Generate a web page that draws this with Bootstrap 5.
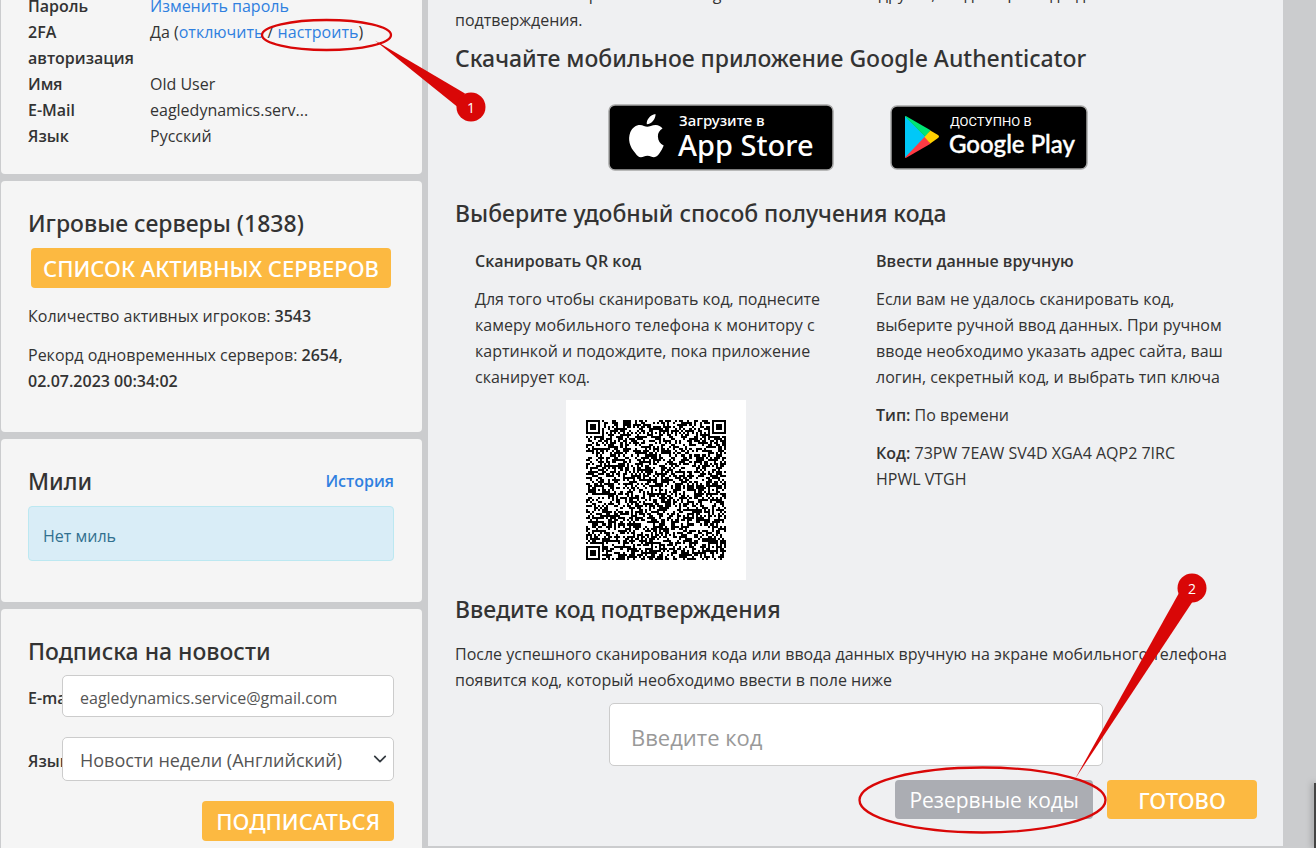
<!DOCTYPE html>
<html lang="ru">
<head>
<meta charset="utf-8">
<meta name="viewport" content="width=device-width, initial-scale=1">
<title>Двухфакторная авторизация</title>
<link href="https://cdn.jsdelivr.net/npm/bootstrap@5.3.0/dist/css/bootstrap.min.css" rel="stylesheet">
<style>
:root { --accent: #fcb941; --ink: #333; --blue: #2f80e0; --pin: #d90707; }
body { font: 16px/26px "Open Sans", "Noto Sans", sans-serif; color: var(--ink); background: #cbccce; overflow: hidden; }
a { color: var(--blue); text-decoration: none; }
b, dt, .field-label { font-weight: 600; }
h2 { font-family: "Noto Sans", sans-serif; font-size: 23px; line-height: 32px; font-weight: 500; margin: 0; }
.page { display: grid; grid-template-columns: 421px minmax(0, 1fr); column-gap: 6px; padding: 0 33px 0 1px; position: relative; height: 100vh; overflow: hidden; }
.sidebar { display: flex; flex-direction: column; gap: 7px; }
.panel { background: #f5f5f5; border-radius: 4px; padding: 26px 28px 38px 27px; }
.panel-profile { margin-top: -33px; padding-bottom: 25px; }
.profile { display: grid; grid-template-columns: 106px minmax(0, 1fr); column-gap: 16px; margin: 0; }
.profile dd { margin: 0; }
.btn { border: 0; border-radius: 4px; font-size: 22px; line-height: 40px; padding: 0 14px; height: 40px; color: #fff; }
.btn-accent { background: var(--accent); font-family: "Noto Sans", sans-serif; font-weight: 500; }
.btn-muted { background: #abadb3; font-size: 21px; }
.btn-servers { margin: 9px 3px 15px; align-self: stretch; padding: 0; }
.record { margin-top: 13px; }
.panel-miles { padding-bottom: 41px; }
.alert-miles { background: #d9edf7; border: 1px solid #bce8f1; color: #31708f; border-radius: 4px; padding: 16px 14px 11px; margin: 9px 0 0; }
.field { display: grid; grid-template-columns: 34px minmax(0, 1fr); align-items: center; margin-bottom: 20px; }
.field-label { overflow: hidden; white-space: nowrap; padding-top: 4px; }
.form-control, .form-select { border-color: #ccc; border-radius: 5px; color: #555; padding: 3px 17px 0; font-size: 16px; height: 42px; }
.form-select { height: 44px; font-size: 18px; padding-right: 32px; background-position: right 6px center; background-size: 14px 14px; }
.main-panel { background: #eff0f2; padding: 0 26px 0 27px; height: 846px; }
.intro { margin: -19px 0 9px; }
.stores { display: flex; justify-content: center; align-items: center; gap: 56px; padding-right: 16px; margin: 30px 0 26px; }
.stores svg { display: block; }
.methods { display: grid; grid-template-columns: 1fr 1fr; margin-top: 19px; margin-bottom: 13px; }
.method { padding: 0 20px; }
.method p { margin: 12px 0 0; }
.qr { display: block; width: 180px; height: 180px; padding: 20px; background: #fff; margin: 10px auto 0; }
.code-input { max-width: 494px; height: 63px; font-size: 22px; padding: 4px 21px 0; margin: 10px auto 14px; }
.code-input::placeholder { color: #999; opacity: 1; }
.actions { display: flex; justify-content: flex-end; gap: 14px; }
.actions .btn { height: 39px; }
.btn-done { width: 150px; }
.pins { position: absolute; left: 0; top: 0; pointer-events: none; }
.edge { position: absolute; right: 0; bottom: 0; width: 2px; height: 65px; background: #444; box-shadow: -1px 0 6px rgba(0,0,0,.5); }
</style>
</head>
<body>
<div class="page">
  <aside class="sidebar">
    <section class="panel panel-profile">
      <dl class="profile">
        <dt>Пароль</dt><dd><a href="#">Изменить пароль</a></dd>
        <dt>2FA авторизация</dt><dd>Да (<a href="#">отключить</a> / <a href="#">настроить</a>)</dd>
        <dt>Имя</dt><dd>Old User</dd>
        <dt>E-Mail</dt><dd>eagledynamics.serv...</dd>
        <dt>Язык</dt><dd>Русский</dd>
      </dl>
    </section>
    <section class="panel d-flex flex-column">
      <h2>Игровые серверы (1838)</h2>
      <button type="button" class="btn btn-accent btn-servers">СПИСОК АКТИВНЫХ СЕРВЕРОВ</button>
      <p class="mb-0">Количество активных игроков: <b>3543</b></p>
      <p class="mb-0 record">Рекорд одновременных серверов: <b>2654, 02.07.2023 00:34:02</b></p>
    </section>
    <section class="panel panel-miles">
      <div class="d-flex justify-content-between align-items-center">
        <h2>Мили</h2><a href="#"><b>История</b></a>
      </div>
      <div class="alert alert-miles">Нет миль</div>
    </section>
    <section class="panel">
      <h2 class="mb-2">Подписка на новости</h2>
      <form>
        <div class="field"><label class="field-label" for="mail">E-mail</label><input id="mail" type="email" class="form-control" value="eagledynamics.service@gmail.com"></div>
        <div class="field"><label class="field-label" for="lang">Язык</label><select id="lang" class="form-select"><option>Новости недели (Английский)</option></select></div>
        <div class="text-end"><button type="button" class="btn btn-accent">ПОДПИСАТЬСЯ</button></div>
      </form>
    </section>
  </aside>

  <main class="main-panel">
    <p class="intro">Это мобильное приложение Google Authenticator или другое, создающее коды для<br>подтверждения.</p>
    <h2>Скачайте мобильное приложение Google Authenticator</h2>
    <div class="stores">
      <a href="#" aria-label="App Store"><svg width="226" height="67" viewBox="0 0 226 67">
        <rect x="1" y="1" width="224" height="65" rx="6" fill="#000" stroke="#a6a6a6" stroke-width="1.5"/>
        <path fill="#fff" d="M47.500 10c.4 4.800-3.800 10-8.700 10.300C38.200 15.700 42.400 10.600 47.500 10zM54.500 24.500c-3 1.900-4.800 4.500-4.600 8.100.1 4.200 2.200 7.300 5.800 8.900-1 2.800-2.400 5.400-4.200 7.800-1.500 2.200-3.100 3.900-5.500 3.900-2.500 0-3.500-1.500-6.500-1.500s-4.200 1.500-6.600 1.500c-2.400 0-4-1.900-5.700-4.300C21.600 43 19.600 35.400 22.300 28.300c1.800-4.700 5.800-7.300 9.700-7.300 2.900 0 5.200 1.800 7.300 1.800 2 0 4.900-2 8.600-1.900 2.400.1 4.900 1.100 6.600 3.600z"/>
        <text x="71" y="22" font-size="15" font-weight="500" font-family="Noto Sans, sans-serif" fill="#fff">Загрузите в</text>
        <text x="70" y="52" font-size="29" font-weight="500" font-family="Noto Sans, sans-serif" fill="#fff">App Store</text>
      </svg></a>
      <a href="#" aria-label="Google Play"><svg width="198" height="65" viewBox="0 0 198 65">
        <rect x="1" y="1" width="196" height="63" rx="6" fill="#000" stroke="#a6a6a6" stroke-width="1.500"/>
        <path fill="#00c8f8" d="M15 11v42l21-21z"/>
        <path fill="#00e676" d="M15 11.500l.8-.5 24.700 14.200L35.500 32z"/>
        <path fill="#ff3a44" d="M15 52.500l.8.500 24.700-14.200L35.500 31z"/>
        <path fill="#ffd000" d="M40.300 25.500L48 30q2 1.500 0 3l-7.700 5.500-5.800-6.500z"/>
        <text x="60" y="21" font-size="13" font-family="Roboto, sans-serif" fill="#fff">ДОСТУПНО В</text>
        <text x="59" y="48" font-size="24" font-weight="500" font-family="Lato, sans-serif" fill="#fff" stroke="#fff" stroke-width=".4">Google Play</text>
      </svg></a>
    </div>
    <h2>Выберите удобный способ получения кода</h2>
    <div class="methods">
      <section class="method">
        <b>Сканировать QR код</b>
        <p>Для того чтобы сканировать код, поднесите камеру мобильного телефона к монитору с картинкой и подождите, пока приложение сканирует код.</p>
        <svg class="qr" id="qr" viewBox="0 0 69 69" shape-rendering="crispEdges" role="img" aria-label="QR код"></svg>
      </section>
      <section class="method">
        <b>Ввести данные вручную</b>
        <p>Если вам не удалось сканировать код, выберите ручной ввод данных. При ручном вводе необходимо указать адрес сайта, ваш логин, секретный код, и выбрать тип ключа</p>
        <p><b>Тип:</b> По времени</p>
        <p class="pe-4"><b>Код:</b> 73PW 7EAW SV4D XGA4 AQP2 7IRC HPWL VTGH</p>
      </section>
    </div>
    <h2>Введите код подтверждения</h2>
    <p class="mb-0 mt-3"><label for="code">После успешного сканирования кода или ввода данных вручную на экране мобильного телефона появится код, который необходимо ввести в поле ниже</label></p>
    <input id="code" class="form-control code-input" placeholder="Введите код">
    <div class="actions">
      <button type="button" class="btn btn-muted">Резервные коды</button>
      <button type="button" class="btn btn-accent btn-done">ГОТОВО</button>
    </div>
  </main>

  <svg class="pins" width="1316" height="848" viewBox="0 0 1316 848">
    <g fill="none" stroke="#d90707" stroke-width="2.300">
      <ellipse cx="326.500" cy="35" rx="64.500" ry="15"/>
      <ellipse cx="982.500" cy="800" rx="123" ry="32.500"/>
    </g>
    <g fill="#d90707">
      <path d="M375 40.500l90 53-8 13z"/><circle cx="471" cy="107" r="14.500"/>
      <path d="M1075 779l104-186 14 8z"/><circle cx="1192" cy="588" r="14.500"/>
    </g>
    <g fill="#fff" font-size="14" text-anchor="middle"><text x="471" y="113">1</text><text x="1192" y="594">2</text></g>
  </svg>
  <div class="edge"></div>
</div>
<script src="https://cdn.jsdelivr.net/npm/bootstrap@5.3.0/dist/js/bootstrap.bundle.min.js"></script>
<script>
// Builds a 69-module code: finder, alignment and timing patterns over data modules.
const N = 69, centers = [6, 34, 62];
let seed = 1838;
const next = () => (seed = (seed * 1103515245 + 12345) % 2147483648) / 2147483648;
const ring = (x, y, cx, cy) => Math.max(Math.abs(x - cx), Math.abs(y - cy));
let d = '';
for (let y = 0; y < N; y++) for (let x = 0; x < N; x++) {
  let on = next() < 0.52;
  if (x === 6 || y === 6) on = (x + y) % 2 === 0;
  for (const cx of centers) for (const cy of centers) {
    const r = ring(x, y, cx, cy);
    if (r <= 2) on = r !== 1;
  }
  for (const [cx, cy] of [[3, 3], [65, 3], [3, 65]]) {
    const r = ring(x, y, cx, cy);
    if (r <= 4) on = r < 2 || r === 3;
  }
  if (on) d += `M${x} ${y}h1v1h-1z`;
}
document.getElementById('qr').innerHTML = `<path d="${d}"/>`;
</script>
</body>
</html>
